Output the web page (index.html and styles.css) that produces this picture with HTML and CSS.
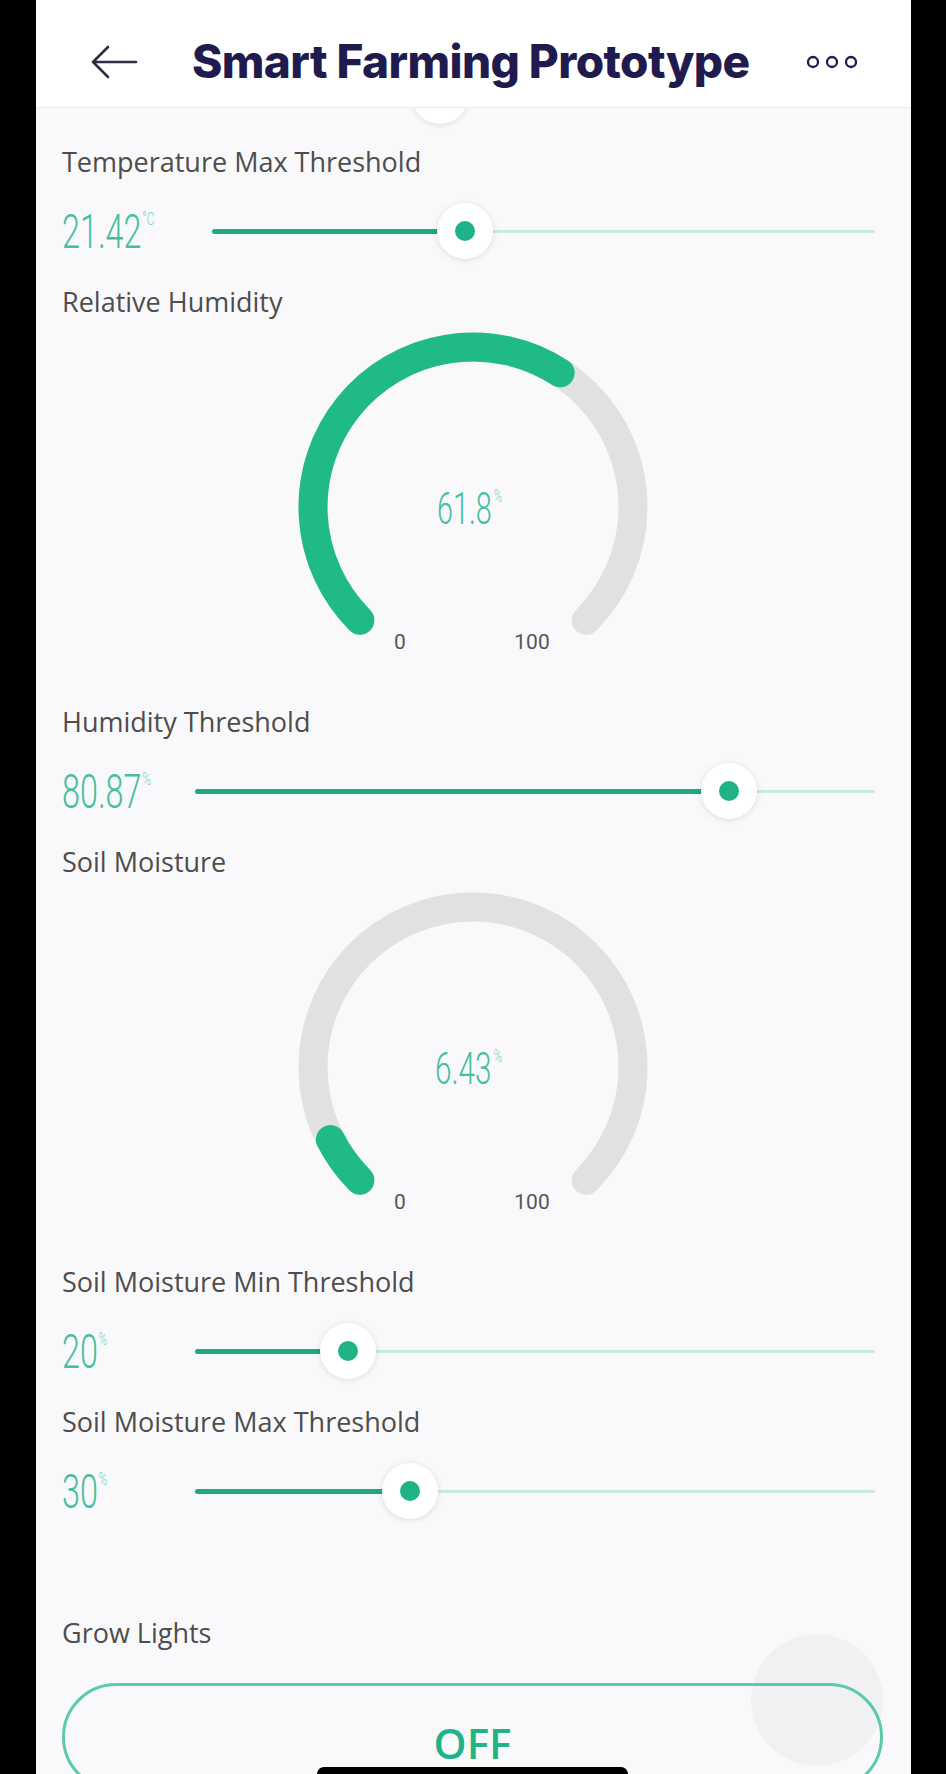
FILE: index.html
```html
<!DOCTYPE html>
<html lang="en">
<head>
<meta charset="utf-8">
<title>Smart Farming Prototype</title>
<link rel="stylesheet" href="styles.css">
</head>
<body>
<div class="phone">
  <header class="topbar">
    <svg class="back" width="48" height="36" viewBox="0 0 48 36" aria-label="Back">
      <path d="M46 18H3M18 3L3 18L18 33" fill="none" stroke="currentColor" stroke-width="2.6" stroke-linecap="round" stroke-linejoin="round"/>
    </svg>
    <h1 class="title">Smart Farming Prototype</h1>
    <svg class="more" width="50" height="14" viewBox="0 0 50 14" aria-label="More">
      <circle cx="6" cy="7" r="5" fill="none" stroke="currentColor" stroke-width="2.3"/>
      <circle cx="25" cy="7" r="5" fill="none" stroke="currentColor" stroke-width="2.3"/>
      <circle cx="44" cy="7" r="5" fill="none" stroke="currentColor" stroke-width="2.3"/>
    </svg>
  </header>

  <main class="content">
    <div class="slider slider--scrolled">
      <div class="value"></div>
      <div class="track"><div class="fill" style="width:36%"></div><div class="knob" style="left:36%"></div></div>
    </div>

    <section class="widget">
      <div class="label">Temperature Max Threshold</div>
      <div class="slider">
        <div class="value value--wide"><span class="readout"><span class="num">21.42</span><span class="unit">°C</span></span></div>
        <div class="track"><div class="fill" style="width:38.2%"></div><div class="knob" style="left:38.2%"></div></div>
      </div>
    </section>

    <section class="widget">
      <div class="label">Relative Humidity</div>
      <svg class="gauge" width="360" height="330" viewBox="0 0 360 330">
        <path class="gauge-bg" d="M66.86 293.14A160 160 0 1 1 293.14 293.14"/>
        <path class="gauge-fill" d="M66.86 293.14A160 160 0 0 1 267.14 45.81"/>
        <text class="gauge-val" transform="translate(144 197) scale(0.64 1)">61.8<tspan class="gauge-unit" dx="3" dy="-22">%</tspan></text>
        <text class="gauge-tick" x="107" y="322" text-anchor="middle">0</text>
        <text class="gauge-tick" x="239" y="322" text-anchor="middle">100</text>
      </svg>
    </section>

    <section class="widget">
      <div class="label">Humidity Threshold</div>
      <div class="slider">
        <div class="value"><span class="readout"><span class="num">80.87</span><span class="unit">%</span></span></div>
        <div class="track"><div class="fill" style="width:78.5%"></div><div class="knob" style="left:78.5%"></div></div>
      </div>
    </section>

    <section class="widget">
      <div class="label">Soil Moisture</div>
      <svg class="gauge" width="360" height="330" viewBox="0 0 360 330">
        <path class="gauge-bg" d="M66.86 293.14A160 160 0 1 1 293.14 293.14"/>
        <path class="gauge-fill" d="M66.86 293.14A160 160 0 0 1 37.44 252.64"/>
        <text class="gauge-val" transform="translate(142 197) scale(0.66 1)">6.43<tspan class="gauge-unit" dx="3" dy="-22">%</tspan></text>
        <text class="gauge-tick" x="107" y="322" text-anchor="middle">0</text>
        <text class="gauge-tick" x="239" y="322" text-anchor="middle">100</text>
      </svg>
    </section>

    <section class="widget">
      <div class="label">Soil Moisture Min Threshold</div>
      <div class="slider">
        <div class="value"><span class="readout"><span class="num">20</span><span class="unit">%</span></span></div>
        <div class="track"><div class="fill" style="width:22.5%"></div><div class="knob" style="left:22.5%"></div></div>
      </div>
    </section>

    <section class="widget">
      <div class="label">Soil Moisture Max Threshold</div>
      <div class="slider">
        <div class="value"><span class="readout"><span class="num">30</span><span class="unit">%</span></span></div>
        <div class="track"><div class="fill" style="width:31.6%"></div><div class="knob" style="left:31.6%"></div></div>
      </div>
    </section>

    <section class="widget widget--button">
      <div class="label">Grow Lights</div>
      <button class="toggle">OFF</button>
    </section>
  </main>

  <div class="ripple"></div>
  <div class="home-indicator"></div>
</div>
</body>
</html>
```

FILE: styles.css
```css
* { box-sizing: border-box; }

html, body {
  margin: 0;
  padding: 0;
  background: #000;
  height: 1774px;
  overflow: hidden;
}

.phone {
  position: relative;
  margin-left: 36px;
  width: 875px;
  height: 1774px;
  overflow: hidden;
  background: #f9f9fb;
  display: flex;
  flex-direction: column;
}

.topbar {
  position: relative;
  z-index: 2;
  flex: none;
  height: 108px;
  background: #fff;
  border-bottom: 1px solid #ececef;
  display: flex;
  align-items: center;
  padding: 14px 54px 0 54px;
  color: #1f1b4f;
}

.back {
  flex: none;
  color: #2d2b45;
  margin-top: 2px;
}

.title {
  margin: 0 0 0 54px;
  font-family: Inter, "Noto Sans", sans-serif;
  font-weight: 800;
  font-size: 46px;
  letter-spacing: -0.6px;
  line-height: 1;
  color: #1f1b4f;
  white-space: nowrap;
}

.more {
  flex: none;
  margin-left: auto;
  margin-top: 2px;
  color: #1f1b4f;
}

.content {
  position: relative;
  z-index: 1;
  padding: 0 28px 0 26px;
}

.slider--scrolled {
  margin-top: -47px;
  margin-bottom: 15px;
}

.widget {
  display: flex;
  flex-direction: column;
}

.label {
  height: 32px;
  line-height: 32px;
  font-family: "Open Sans", "Noto Sans", sans-serif;
  font-size: 27px;
  color: #4d4d4d;
  white-space: nowrap;
}

.slider {
  display: flex;
  align-items: center;
  height: 70px;
  padding-right: 8px;
}

.widget .slider {
  margin-top: 18px;
  margin-bottom: 20px;
}

.value {
  flex: none;
  width: 133px;
  color: #47bf9e;
}

.value--wide {
  width: 150px;
}

.readout {
  display: inline-flex;
  align-items: flex-start;
  transform: scaleX(0.66);
  transform-origin: left center;
}

.num {
  font-family: Roboto, "Liberation Sans", sans-serif;
  font-weight: 300;
  font-size: 49px;
  line-height: 1;
}

.unit {
  font-family: Roboto, "Liberation Sans", sans-serif;
  font-weight: 300;
  font-size: 18px;
  line-height: 1;
  margin-top: 3px;
  margin-left: 1px;
  color: #7fd3bb;
}

.track {
  position: relative;
  flex: 1;
  height: 70px;
}

.track::before {
  content: "";
  position: absolute;
  left: 0;
  right: 0;
  top: 50%;
  height: 3px;
  margin-top: -1.5px;
  background: #c6ebdf;
  border-radius: 2px;
}

.fill {
  position: absolute;
  left: 0;
  top: 50%;
  height: 5px;
  margin-top: -2.5px;
  background: #1fa882;
  border-radius: 3px;
}

.knob {
  position: absolute;
  top: 50%;
  width: 56px;
  height: 56px;
  margin: -28px 0 0 -28px;
  border-radius: 50%;
  background: #fff;
  box-shadow: 0 1px 6px rgba(0, 0, 0, 0.12);
  display: flex;
  align-items: center;
  justify-content: center;
}

.knob::after {
  content: "";
  width: 20px;
  height: 20px;
  border-radius: 50%;
  background: #1db386;
}

.gauge {
  display: block;
  align-self: center;
  margin: 9px 0 49px;
}

.gauge-bg,
.gauge-fill {
  fill: none;
  stroke-width: 29;
  stroke-linecap: round;
}

.gauge-bg { stroke: #e1e1e3; }
.gauge-fill { stroke: #1fba87; }

.gauge-val {
  font-family: Roboto, "Liberation Sans", sans-serif;
  font-weight: 300;
  font-size: 45px;
  fill: #47bf9e;
}

.gauge-unit {
  font-size: 18px;
  fill: #7fd3bb;
}

.gauge-tick {
  font-family: Roboto, "Liberation Sans", sans-serif;
  font-size: 21px;
  fill: #555;
}

.widget--button {
  margin-top: 71px;
}

.toggle {
  margin-top: 34px;
  height: 108px;
  width: 100%;
  border: 3px solid #5ccaa8;
  border-radius: 54px;
  background: transparent;
  display: flex;
  align-items: center;
  justify-content: center;
  font-family: "Open Sans", "Noto Sans", sans-serif;
  font-weight: 600;
  font-size: 42px;
  color: #1fb387;
  padding: 10px 0 0;
}

.ripple {
  position: absolute;
  z-index: 0;
  left: 715px;
  top: 1634px;
  width: 132px;
  height: 132px;
  border-radius: 50%;
  background: rgba(0, 0, 0, 0.03);
}

.home-indicator {
  position: absolute;
  z-index: 3;
  left: 281px;
  bottom: 0;
  width: 311px;
  height: 7px;
  border-radius: 7px 7px 0 0;
  background: #000;
}
```
